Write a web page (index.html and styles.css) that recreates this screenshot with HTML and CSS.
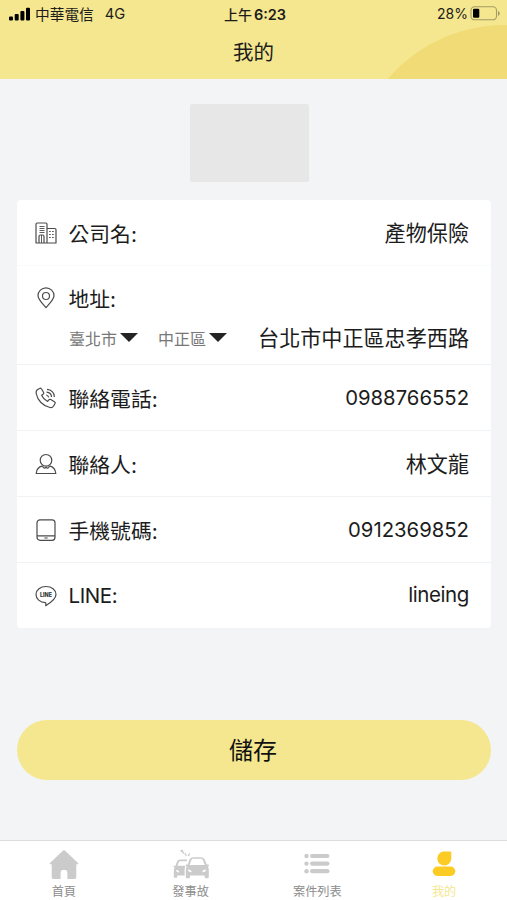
FILE: index.html
```html
<!DOCTYPE html>
<html lang="zh-Hant">
<head>
<meta charset="utf-8">
<meta name="viewport" content="width=device-width, initial-scale=1">
<title>我的</title>
<link rel="stylesheet" href="styles.css">
</head>
<body>
<div class="screen">
  <header class="header">
    <div class="status">
      <div class="status-left">
        <svg class="signal" width="22" height="14" viewBox="0 0 22 14"><rect x="0" y="9.5" width="4" height="4" rx="1"/><rect x="5.7" y="7" width="4" height="6.5" rx="1"/><rect x="11.4" y="4" width="4" height="9.5" rx="1"/><rect x="17" y="0.8" width="4" height="12.7" rx="1"/></svg>
        <span class="carrier">中華電信</span>
        <span class="network">4G</span>
      </div>
      <div class="status-time">上午<span class="clock">6:23</span></div>
      <div class="status-right">
        <span>28%</span>
        <svg width="31" height="15" viewBox="0 0 31 15"><rect x="1" y="0.8" width="25.5" height="13" rx="3.6" fill="none" stroke="#a39b66" stroke-width="1.1"/><rect x="3" y="2.8" width="6.3" height="9" rx="1.3" fill="#000"/><path d="M28 5v4.8c2.4-.8 2.4-4 0-4.8z" fill="#a39b66"/></svg>
      </div>
    </div>
    <h1 class="title">我的</h1>
  </header>

  <main class="content">
    <div class="logo-box"></div>

    <section class="card">
      <div class="row row-company">
        <svg class="icon" viewBox="0 0 22 22"><path d="M1 21V2.200C1 1.400 1.400 1 2.200 1h8.600c.8 0 1.200.4 1.200 1.200V21zM12 6.500h7.800c.8 0 1.200.4 1.200 1.200V21h-9M4 21v-6.500c0-1 .5-1.500 1.400-1.500h2.200c.9 0 1.400.5 1.400 1.500V21"/><path class="thin" d="M4.500 4.500h5M4.500 6.500h5M4.500 8.500h5M4.500 10.500h5M6.500 13v8M14 9.500h1.800M17 9.500h1.800M14 12.500h1.800M17 12.500h1.800M14 15.500h1.800M17 15.500h1.800"/></svg>
        <span class="label">公司名:</span>
        <span class="value">產物保險</span>
      </div>
      <div class="row row-address">
        <div class="address-head">
          <svg class="icon" viewBox="0 0 22 22"><path d="M11 20.700C9.200 18.300 3 12.800 3 8.800a8 8 0 0 1 16 0c0 4-6.200 9.500-8 11.900z"/><circle cx="11" cy="9" r="3.500"/></svg>
          <span class="label">地址:</span>
        </div>
        <div class="address-body">
          <span class="select">臺北市<i class="caret"></i></span>
          <span class="select">中正區<i class="caret"></i></span>
          <span class="value">台北市中正區忠孝西路</span>
        </div>
      </div>
      <div class="row">
        <svg class="icon" viewBox="0 0 22 22"><path d="M2.300 2.800 4.500 1.500c.8-.5 1.500-.2 2 .5l2 3.200c.5.8.3 1.500-.4 2L6.600 8.300c1.200 2.700 3.300 4.900 6 6.200l1.200-1.600c.5-.7 1.200-.8 2-.4l3.600 2.200c.8.500 1 1.200.5 2l-1.500 2.600c-.7 1.100-2 1.500-3.500 1.200C7.900 19 2.500 13.400 1.200 6.500 1 5 1.200 3.600 2.300 2.800zM12 2.300c4.200.2 7.400 3.500 7.400 7.700M11.600 5.200c2.900.2 4.800 2.200 4.900 4.900M11.200 8c1.400.2 2.200 1 2.400 2.400"/></svg>
        <span class="label">聯絡電話:</span>
        <span class="value number">0988766552</span>
      </div>
      <div class="row">
        <svg class="icon" viewBox="0 0 22 22"><circle cx="11" cy="7.300" r="5.800"/><path d="M7.500 12.800c-3.500.8-6 3.600-6.300 7.700h19.600c-.3-4.100-2.800-6.900-6.300-7.700M7.700 13c.2 1.500 1 2.300 2 2.200l1.300-.9 1.300.9c1 .1 1.800-.7 2-2.200"/></svg>
        <span class="label">聯絡人:</span>
        <span class="value">林文龍</span>
      </div>
      <div class="row">
        <svg class="icon" viewBox="0 0 22 22"><rect x="2" y="0.800" width="18" height="20.500" rx="3"/><path d="M2 16.800h18M9.300 19h3.400"/></svg>
        <span class="label">手機號碼:</span>
        <span class="value number">0912369852</span>
      </div>
      <div class="row">
        <svg class="icon" viewBox="0 0 22 22"><path d="M11 1.500c5.500 0 10 3.500 10 8 0 4-5 8-10.300 11.200.3-1.200.5-2.200-.2-3C5 17.300 1 13.900 1 9.500c0-4.500 4.500-8 10-8z"/><text class="line-mark" x="11" y="11.700" text-anchor="middle">LINE</text></svg>
        <span class="label latin">LINE:</span>
        <span class="value latin">lineing</span>
      </div>
    </section>

    <button class="save" type="button">儲存</button>
  </main>

  <nav class="tabs">
    <a class="tab">
      <svg class="tab-icon" width="36" height="32" viewBox="0 0 36 32"><path d="M18 2.200a1.500 1.500 0 0 1 1.100.5l12.700 12c.8.8.5 1.500-.5 1.500h-1V29c0 1.200-.7 1.900-1.900 1.900h-7V25c0-2.200-1-3.300-3.400-3.300S14.600 22.800 14.600 25v5.900h-7c-1.200 0-1.900-.7-1.900-1.900V16.200h-1c-1 0-1.300-.7-.5-1.500l12.700-12a1.500 1.500 0 0 1 1.100-.5z"/></svg>
      <span>首頁</span>
    </a>
    <a class="tab">
      <svg class="tab-icon" width="36" height="32" viewBox="0 0 36 32"><path d="M7 2.500 9.500 1.500l2.500 5.800zM12.300 7.500l-.6-3.700 2.500 3.900zM14.500 7.500l2.500-3.200-.7 4z"/><path fill-rule="evenodd" d="M16.500 11.500C17.500 10 19 9.200 21 9.200h6.500c2.200 0 3.500.8 4.300 2.600l2 4.700h1.400c.9 0 .9 1.700 0 1.900l-.5.200c.9 1.200 1.100 2.400 1.100 4v6.200c0 1-.5 1.500-1.500 1.500h-1.200c-1 0-1.500-.5-1.500-1.500v-1.300H17v1.300c0 1-.5 1.500-1.500 1.500h-1.200c-1 0-1.500-.5-1.500-1.500v-6.200c0-1.600.2-2.800 1.100-4l-.5-.2c-.9-.2-.9-1.900 0-1.900h1.300zM18.400 12 16.600 17h15.200l-2-5c-.4-.8-1-1.200-2-1.200h-7.200c-1.100 0-1.800.4-2.200 1.200zM15 21.500c0 1.700 1 2.700 3.700 2.800 0-1.700-1.300-2.700-3.700-2.800zm18 0c-2.400.1-3.700 1.100-3.700 2.800 2.700-.1 3.700-1.100 3.700-2.800z"/><path fill-rule="evenodd" d="M14.300 11.500H7.500c-2 0-3 .8-3.700 2.500l-1.300 3.800H1.200c-.9 0-.9 1.500 0 1.700l.5.200C1 20.700.8 21.800.8 23v5.400c0 .9.400 1.300 1.200 1.300h1c.9 0 1.300-.4 1.300-1.300v-1h7.300v-5.500c0-1 .2-2 .7-2.800-.6-.8-.3-1.800.5-2.200l.5-1.700-.9 2.500H4.500L5.600 14.500c.4-.8.900-1.200 1.900-1.200h6.200zM3 22c0 1.500 1 2.300 3.300 2.400C6.300 22.900 5.200 22.100 3 22z"/></svg>
      <span>發事故</span>
    </a>
    <a class="tab">
      <svg class="tab-icon" width="36" height="32" viewBox="0 0 36 32"><circle cx="7.500" cy="8" r="2.200"/><circle cx="7.500" cy="15.600" r="2.200"/><circle cx="7.500" cy="23.200" r="2.200"/><rect x="11" y="5.900" width="19.500" height="4.200" rx="2.100"/><rect x="11" y="13.500" width="19.500" height="4.200" rx="2.100"/><rect x="11" y="21.100" width="19.500" height="4.200" rx="2.100"/></svg>
      <span>案件列表</span>
    </a>
    <a class="tab active">
      <svg class="tab-icon" width="36" height="32" viewBox="0 0 36 32"><path d="M25.300 4.500v6.200a7 7 0 1 1-8-7.200h7c.7 0 1 .3 1 1z"/><rect x="6.700" y="18.500" width="22.600" height="9.500" rx="4.700"/></svg>
      <span>我的</span>
    </a>
  </nav>
</div>
</body>
</html>
```
FILE: styles.css
```css
* {
  box-sizing: border-box;
}

body {
  margin: 0;
  background: #f2f4f6;
  color: #1c1c1c;
  font-family: Inter, "Noto Sans CJK TC", sans-serif;
}

.screen {
  display: flex;
  flex-direction: column;
  height: 900px;
}

.header {
  height: 79px;
  background: radial-gradient(circle at 505px 179px, #f1db76 153.500px, transparent 154.500px) #f5e78f;
}

.status {
  display: grid;
  grid-template-columns: 1fr auto 1fr;
  align-items: center;
  height: 27px;
  padding: 0 6px 0 9px;
  font-size: 14.700px;
}

.status-left,
.status-right {
  display: flex;
  align-items: center;
}

.carrier {
  margin-left: 4px;
}

.network {
  margin-left: 11px;
}

.status-time {
  font-weight: 500;
  font-size: 14px;
}

.clock {
  margin-left: 2px;
  font-weight: 600;
  font-size: 14.500px;
}

.status-right {
  justify-content: flex-end;
  gap: 2px;
  font-size: 14px;
}

.title {
  margin: 11px 0 0;
  font-size: 20.500px;
  font-weight: 400;
  line-height: 30px;
  text-align: center;
}

.content {
  flex: 1;
  padding: 25px 16px 0 17px;
}

.logo-box {
  width: 119px;
  height: 78px;
  margin: 0 0 18px 173px;
  border-radius: 2px;
  background: #e7e7e7;
}

.card {
  border-radius: 4px;
  background: #fff;
}

.row {
  display: flex;
  align-items: center;
  height: 66px;
  padding: 0 22px 0 18px;
  border-bottom: 1px solid #f1f2f3;
  font-size: 21px;
}

.row-company {
  border-bottom-color: #f9fafa;
}

.row:last-child {
  height: 65px;
  border-bottom: 0;
}

.row-address {
  flex-direction: column;
  align-items: stretch;
  height: 99px;
}

.address-head {
  display: flex;
  align-items: center;
  height: 64px;
}

.address-body {
  display: flex;
  align-items: center;
  height: 16px;
  padding-left: 34px;
}

.icon {
  flex: none;
  width: 22px;
  height: 22px;
  margin: 0 12px 0 -0.500px;
  fill: none;
  stroke: #4b4b4b;
  stroke-width: 1.200;
  stroke-linejoin: round;
}

.thin {
  stroke-width: 0.900;
}

.line-mark {
  fill: #333;
  stroke: none;
  font: 800 5.500px Inter, sans-serif;
}

.label {
  font-size: 20.800px;
}

.value {
  margin-left: auto;
  padding-bottom: 2px;
  font-size: 21.100px;
  white-space: nowrap;
}

.number {
  padding-bottom: 1px;
  font-size: 20.300px;
}

.latin {
  font-size: 20.500px;
  letter-spacing: -0.400px;
}

.select {
  display: flex;
  align-items: center;
  margin-right: 20px;
  padding-bottom: 1px;
  color: #777;
  font-size: 16px;
}

.select + .select {
  margin-right: 0;
}

.caret {
  margin-left: 3px;
  border: solid transparent;
  border-width: 9px 9px 0;
  border-top-color: #242424;
}

.save {
  display: block;
  width: 100%;
  height: 60px;
  margin-top: 92px;
  padding: 0 2px 3px 0;
  border: 0;
  border-radius: 30px;
  background: #f5e78f;
  color: #111;
  font-family: inherit;
  font-size: 24px;
}

.tabs {
  display: grid;
  grid-template-columns: repeat(4, 1fr);
  height: 60px;
  border-top: 1px solid #dcddde;
  background: #fff;
}

.tab {
  display: flex;
  flex-direction: column;
  align-items: center;
  padding: 7px 0 0 1px;
  color: #8c8c8c;
  font-size: 12.200px;
  line-height: 19px;
}

.tab-icon {
  margin-bottom: 2px;
  fill: #cbcbcb;
}

.active {
  color: #f5e78f;
}

.active .tab-icon {
  fill: #fccc24;
}
```
